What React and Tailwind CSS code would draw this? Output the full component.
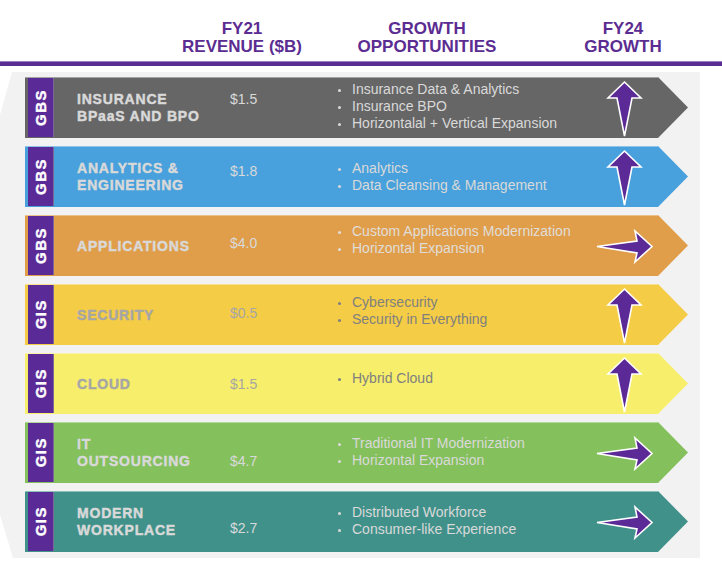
import React from "react";

const PURPLE = "#5b2a96";

function UpArrow() {
  return (
    <svg width="60" height="61" viewBox="0 0 60 61" className="block">
      <polygon
        points="29.5,4 46,20 37,20 29.5,58 22,20 13,20"
        fill={PURPLE}
        stroke="#ffffff"
        strokeWidth="1.6"
        strokeLinejoin="miter"
      />
    </svg>
  );
}

function RightArrow() {
  return (
    <svg width="60" height="61" viewBox="0 0 60 61" className="block">
      <polygon
        points="2,30.5 42,25 40,15 57,30.5 40,46 42,37"
        fill={PURPLE}
        stroke="#ffffff"
        strokeWidth="1.6"
        strokeLinejoin="miter"
      />
    </svg>
  );
}

const rows = [
  {
    tag: "GBS",
    bg: "bg-[#666666] border-[#a3a3a3]",
    label: ["INSURANCE", "BPaaS AND BPO"],
    labelColor: "text-[#d9d9d9]",
    rev: "$1.5",
    revColor: "text-[#d9d9d9]",
    revPt: "pt-[13px]",
    bullets: ["Insurance Data & Analytics", "Insurance BPO", "Horizontalal + Vertical Expansion"],
    bColor: "text-[#d9d9d9]",
    bPt: "pt-[3px]",
    arrow: "up",
  },
  {
    tag: "GBS",
    bg: "bg-[#48a1dc] border-[#8cc3ea]",
    label: ["ANALYTICS &", "ENGINEERING"],
    labelColor: "text-[#d9d9d9]",
    rev: "$1.8",
    revColor: "text-[#d9d9d9]",
    revPt: "pt-[16px]",
    bullets: ["Analytics", "Data Cleansing & Management"],
    bColor: "text-[#d9d9d9]",
    bPt: "pt-[13px]",
    arrow: "up",
  },
  {
    tag: "GBS",
    bg: "bg-[#e09e4a] border-[#ecc08a]",
    label: ["APPLICATIONS"],
    labelColor: "text-[#d9d9d9]",
    rev: "$4.0",
    revColor: "text-[#d9d9d9]",
    revPt: "pt-[19px]",
    bullets: ["Custom Applications Modernization", "Horizontal Expansion"],
    bColor: "text-[#e0ddd9]",
    bPt: "pt-[7px]",
    arrow: "right",
  },
  {
    tag: "GIS",
    bg: "bg-[#f5cc45] border-[#f9e08f]",
    label: ["SECURITY"],
    labelColor: "text-[#a6a6a6]",
    rev: "$0.5",
    revColor: "text-[#a6a6a6]",
    revPt: "pt-[20px]",
    bullets: ["Cybersecurity", "Security in Everything"],
    bColor: "text-[#808080]",
    bPt: "pt-[9px]",
    arrow: "up",
  },
  {
    tag: "GIS",
    bg: "bg-[#f7ee6b] border-[#faf3a8]",
    label: ["CLOUD"],
    labelColor: "text-[#a6a6a6]",
    rev: "$1.5",
    revColor: "text-[#a6a6a6]",
    revPt: "pt-[22px]",
    bullets: ["Hybrid Cloud"],
    bColor: "text-[#808080]",
    bPt: "pt-[16px]",
    arrow: "up",
  },
  {
    tag: "GIS",
    bg: "bg-[#84c05c] border-[#b3d99a]",
    label: ["IT", "OUTSOURCING"],
    labelColor: "text-[#d9d9d9]",
    rev: "$4.7",
    revColor: "text-[#d9d9d9]",
    revPt: "pt-[30px]",
    bullets: ["Traditional IT Modernization", "Horizontal Expansion"],
    bColor: "text-[#d9d9d9]",
    bPt: "pt-[12px]",
    arrow: "right",
  },
  {
    tag: "GIS",
    bg: "bg-[#40918a] border-[#8cc0bb]",
    label: ["MODERN", "WORKPLACE"],
    labelColor: "text-[#d9d9d9]",
    rev: "$2.7",
    revColor: "text-[#d9d9d9]",
    revPt: "pt-[28px]",
    bullets: ["Distributed Workforce", "Consumer-like Experience"],
    bColor: "text-[#d9d9d9]",
    bPt: "pt-[12px]",
    arrow: "right",
  },
];

function Row({ r }) {
  return (
    <div
      className={`flex h-[61px] w-[663px] border-t ${r.bg} [clip-path:polygon(0_0,633px_0,100%_50%,633px_100%,0_100%)]`}
    >
      <div className="ml-[3px] mb-[1px] flex w-[26px] shrink-0 items-center justify-center border-r border-[#7b6a98] bg-[#5a2a97]">
        <span className="rotate-180 text-[15px] font-bold leading-none tracking-[1.5px] text-white [-webkit-text-stroke:0.4px_#ffffff] [writing-mode:vertical-rl]">
          {r.tag}
        </span>
      </div>
      <div
        className={`ml-[23px] flex w-[153px] shrink-0 flex-col justify-center text-[14px] font-bold leading-[17px] tracking-[0.8px] [-webkit-text-stroke:0.45px_currentColor] ${r.labelColor}`}
      >
        {r.label.map((l) => (
          <div key={l} className="whitespace-nowrap">
            {l}
          </div>
        ))}
      </div>
      <div className={`w-[107px] shrink-0 text-[14px] leading-[17px] ${r.revPt} ${r.revColor}`}>{r.rev}</div>
      <div className={`w-[258px] shrink-0 text-[14px] leading-[17px] ${r.bPt} ${r.bColor}`}>
        {r.bullets.map((b) => (
          <div key={b} className="flex h-[17px] items-center whitespace-nowrap">
            <span className="ml-[1px] mr-[11px] mt-[1px] h-[3px] w-[3px] shrink-0 rounded-full bg-current" />
            <span>{b}</span>
          </div>
        ))}
      </div>
      <div className="flex w-[60px] shrink-0 items-start">
        {r.arrow === "up" ? <UpArrow /> : <RightArrow />}
      </div>
    </div>
  );
}

export default function App() {
  return (
    <div className="h-[568px] w-[722px] overflow-hidden bg-white font-['Liberation_Sans',Arial,sans-serif]">
      <div className="flex pt-[20px] text-center text-[17px] font-bold leading-[18px] text-[#5b2c91]">
        <div className="ml-[172px] w-[140px]">
          <div>FY21</div>
          <div>REVENUE ($B)</div>
        </div>
        <div className="ml-[35px] w-[160px]">
          <div>GROWTH</div>
          <div>OPPORTUNITIES</div>
        </div>
        <div className="ml-[66px] w-[100px]">
          <div>FY24</div>
          <div>GROWTH</div>
        </div>
      </div>
      <div className="mt-[5px] h-[1px] bg-[#9a80c0]" />
      <div className="h-[4px] bg-[#5b2c91]" />
      <div className="mt-[6px] flex h-[486px] w-[700px] flex-col gap-[8px] bg-[#f2f2f2] pl-[25px] pt-[5px] [clip-path:polygon(12px_0,100%_0,100%_100%,13px_100%,0_443px,0_43px)]">
        {rows.map((r, i) => (
          <Row key={i} r={r} />
        ))}
      </div>
    </div>
  );
}
